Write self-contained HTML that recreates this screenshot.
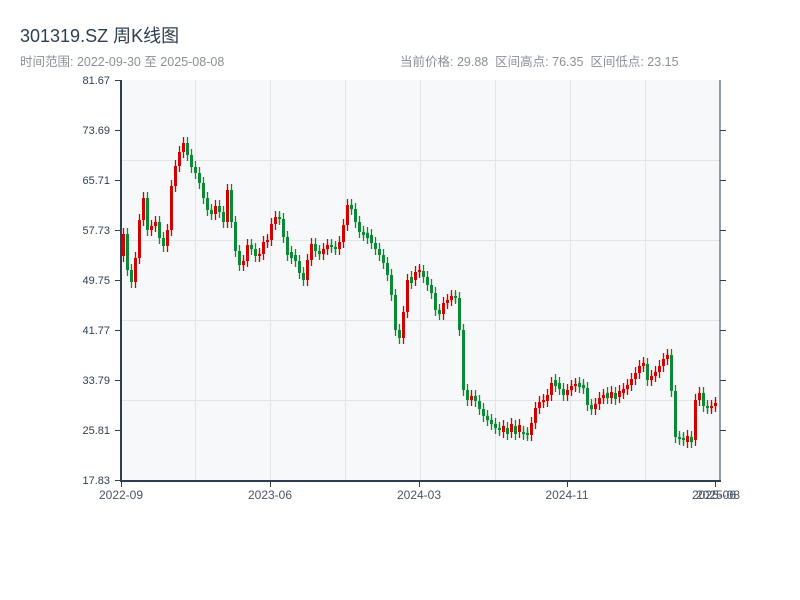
<!DOCTYPE html>
<html><head><meta charset="utf-8"><style>
body{margin:0;width:800px;height:600px;background:#fff;font-family:"Liberation Sans","Noto Sans CJK SC",sans-serif;overflow:hidden;position:relative}
.t{position:absolute;left:20px;top:22px;font-size:18px;color:#2c3e50}
.s{position:absolute;top:51px;font-size:12.5px;color:#8a9099}
svg{position:absolute;left:0;top:0}
</style></head><body>
<div class="t">301319.SZ 周K线图</div>
<div class="s" style="left:20px">时间范围: 2022-09-30 至 2025-08-08</div>
<div class="s" style="left:400px">当前价格: 29.88&nbsp;&nbsp;区间高点: 76.35&nbsp;&nbsp;区间低点: 23.15</div>
<svg width="800" height="600" font-family="Liberation Sans, sans-serif" font-size="11" fill="#2c3e50">
<defs>
<marker id="wr" markerUnits="userSpaceOnUse" markerWidth="4" markerHeight="14" refX="2" refY="7" viewBox="0 0 4 14" orient="0" overflow="visible"><path d="M2 1V13" stroke="#d40000" stroke-width="1.3"/></marker>
<marker id="wg" markerUnits="userSpaceOnUse" markerWidth="4" markerHeight="14" refX="2" refY="7" viewBox="0 0 4 14" orient="0" overflow="visible"><path d="M2 1V13" stroke="#0a8a35" stroke-width="1.3"/></marker>
</defs>
<rect x="121" y="80" width="599" height="401" fill="#f7f8fa"/>
<g stroke="#e1e4e9" stroke-width="1">
<line x1="121" x2="720" y1="160.5" y2="160.5"/><line x1="121" x2="720" y1="240.5" y2="240.5"/><line x1="121" x2="720" y1="320.5" y2="320.5"/><line x1="121" x2="720" y1="400.5" y2="400.5"/>
<line x1="195.5" x2="195.5" y1="80" y2="481"/><line x1="270.5" x2="270.5" y1="80" y2="481"/><line x1="345.5" x2="345.5" y1="80" y2="481"/><line x1="420.5" x2="420.5" y1="80" y2="481"/><line x1="495.5" x2="495.5" y1="80" y2="481"/><line x1="570.5" x2="570.5" y1="80" y2="481"/><line x1="645.5" x2="645.5" y1="80" y2="481"/>
</g>
<path fill="none" stroke="#d40000" stroke-width="3" marker-start="url(#wr)" marker-mid="url(#wr)" marker-end="url(#wr)" d="M123.5 234V256M135.5 258V282M139.5 220V258M143.5 198V220M151.5 226V230M155.5 222V226M167.5 230V246M171.5 186V230M175.5 166V186M179.5 152V166M183.5 143V152M215.5 206V214M227.5 190V222M243.5 261V265M247.5 245V261M259.5 254V256M263.5 242V254M267.5 240V242M271.5 224V240M275.5 217V224M307.5 260V280M311.5 244V260M323.5 249V254M327.5 245V249M339.5 242V249M343.5 225V242M347.5 205V225M403.5 312V338M407.5 280V312M415.5 272V280M419.5 270V272M443.5 303V314M447.5 300V303M451.5 296V300M471.5 396V400M503.5 426V432M511.5 424V432M519.5 425V432M531.5 423V435M535.5 408V423M539.5 402V408M543.5 400V402M547.5 395V401M551.5 383V395M567.5 390V395M571.5 386V390M575.5 384V386M595.5 404V409M599.5 398V404M603.5 395V398M611.5 392V398M619.5 391V397M623.5 389V393M627.5 385V389M631.5 379V385M635.5 373V379M639.5 366V373M643.5 363V366M651.5 376V380M655.5 372V376M659.5 366V372M663.5 359V366M667.5 355V359M687.5 436V442M695.5 400V440M699.5 393V400M711.5 406V408M715.5 403V406"/>
<path fill="none" stroke="#0a8a35" stroke-width="3" marker-start="url(#wg)" marker-mid="url(#wg)" marker-end="url(#wg)" d="M127.5 234V270M131.5 270V282M147.5 198V230M159.5 222V238M163.5 238V246M187.5 143V155M191.5 155V167M195.5 167V173M199.5 173V183M203.5 183V198M207.5 198V210M211.5 210V214M219.5 206V212M223.5 212V222M231.5 190V222M235.5 222V251M239.5 251V265M251.5 245V249M255.5 249V256M279.5 217V219M283.5 219V237M287.5 237V255M291.5 252V258M295.5 255V261M299.5 261V273M303.5 273V280M315.5 244V251M319.5 251V254M331.5 245V247M335.5 247V249M351.5 205V209M355.5 209V222M359.5 222V232M363.5 232V235M367.5 233V238M371.5 235V243M375.5 243V249M379.5 249V255M383.5 255V263M387.5 263V275M391.5 275V295M395.5 295V330M399.5 330V338M411.5 277V283M423.5 271V277M427.5 277V285M431.5 285V293M435.5 293V310M439.5 310V314M455.5 296V298M459.5 298V330M463.5 330V390M467.5 390V400M475.5 396V401M479.5 401V409M483.5 409V416M487.5 416V420M491.5 420V424M495.5 424V428M499.5 428V430M507.5 428V434M515.5 426V434M523.5 432V434M527.5 433V435M555.5 380V386M559.5 383V389M563.5 389V395M579.5 383V387M583.5 385V388M587.5 388V405M591.5 405V409M607.5 393V398M615.5 393V399M647.5 364V380M671.5 355V391M675.5 391V437M679.5 437V439M683.5 438V440M691.5 437V442M703.5 393V406M707.5 406V408"/>
<g stroke="#2c3e50">
<line x1="121" x2="121" y1="80" y2="482" stroke-width="2"/>
<line x1="120" x2="721" y1="481" y2="481" stroke-width="2"/>
<line x1="720" x2="720" y1="80" y2="482" stroke-width="1"/>
<line x1="115" x2="121" y1="80.5" y2="80.5"/><line x1="115" x2="121" y1="130.5" y2="130.5"/><line x1="115" x2="121" y1="180.5" y2="180.5"/><line x1="115" x2="121" y1="230.5" y2="230.5"/><line x1="115" x2="121" y1="280.5" y2="280.5"/><line x1="115" x2="121" y1="330.5" y2="330.5"/><line x1="115" x2="121" y1="380.5" y2="380.5"/><line x1="115" x2="121" y1="430.5" y2="430.5"/><line x1="115" x2="121" y1="480.5" y2="480.5"/>
<line x1="720" x2="726" y1="130.5" y2="130.5"/><line x1="720" x2="726" y1="180.5" y2="180.5"/><line x1="720" x2="726" y1="230.5" y2="230.5"/><line x1="720" x2="726" y1="280.5" y2="280.5"/><line x1="720" x2="726" y1="330.5" y2="330.5"/><line x1="720" x2="726" y1="380.5" y2="380.5"/><line x1="720" x2="726" y1="430.5" y2="430.5"/>
<line x1="121.5" x2="121.5" y1="481" y2="487"/><line x1="270.5" x2="270.5" y1="481" y2="487"/><line x1="419.5" x2="419.5" y1="481" y2="487"/><line x1="567.5" x2="567.5" y1="481" y2="487"/><line x1="715.5" x2="715.5" y1="481" y2="487"/>
</g>
<g text-anchor="end">
<text x="110" y="84">81.67</text><text x="110" y="134">73.69</text><text x="110" y="184">65.71</text><text x="110" y="234">57.73</text><text x="110" y="284">49.75</text><text x="110" y="334">41.77</text><text x="110" y="384">33.79</text><text x="110" y="434">25.81</text><text x="110" y="484">17.83</text>
</g>
<g text-anchor="middle" fill="#4a5563" font-size="12">
<text x="121" y="499">2022-09</text><text x="270" y="499">2023-06</text><text x="419" y="499">2024-03</text><text x="567" y="499">2024-11</text><text x="714" y="499">2025-06</text><text x="718" y="499">2025-08</text>
</g>
</svg>
</body></html>
